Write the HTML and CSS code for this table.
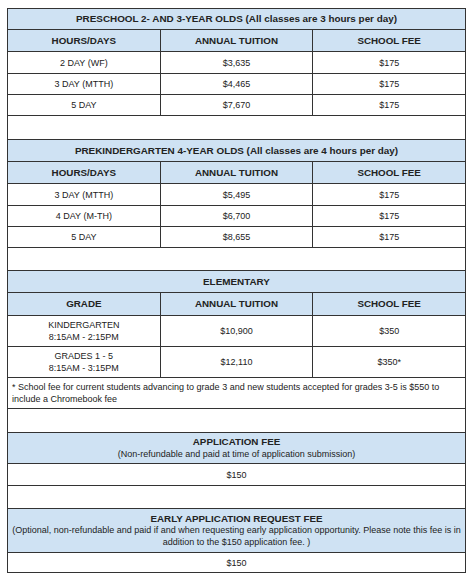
FILE: index.html
```html
<!DOCTYPE html>
<html>
<head>
<meta charset="utf-8">
<link rel="stylesheet" href="styles.css">
</head>
<body>
<table class="fees">
  <colgroup><col class="c"><col class="c"><col class="c"></colgroup>
  <tbody>
    <tr class="h21"><td colspan="3" class="title">PRESCHOOL 2- AND 3-YEAR OLDS (All classes are 3 hours per day)</td></tr>
    <tr class="h22"><td class="head">HOURS/DAYS</td><td class="head">ANNUAL TUITION</td><td class="head">SCHOOL FEE</td></tr>
    <tr class="h22"><td>2 DAY (WF)</td><td>$3,635</td><td>$175</td></tr>
    <tr class="h21"><td>3 DAY (MTTH)</td><td>$4,465</td><td>$175</td></tr>
    <tr class="h21"><td>5 DAY</td><td>$7,670</td><td>$175</td></tr>
    <tr class="h24"><td colspan="3"></td></tr>

    <tr class="h22"><td colspan="3" class="title">PREKINDERGARTEN 4-YEAR OLDS (All classes are 4 hours per day)</td></tr>
    <tr class="h22"><td class="head">HOURS/DAYS</td><td class="head">ANNUAL TUITION</td><td class="head">SCHOOL FEE</td></tr>
    <tr class="h22"><td>3 DAY (MTTH)</td><td>$5,495</td><td>$175</td></tr>
    <tr class="h21"><td>4 DAY (M-TH)</td><td>$6,700</td><td>$175</td></tr>
    <tr class="h21"><td>5 DAY</td><td>$8,655</td><td>$175</td></tr>
    <tr class="h23"><td colspan="3"></td></tr>

    <tr class="h22"><td colspan="3" class="title">ELEMENTARY</td></tr>
    <tr class="h23"><td class="head">GRADE</td><td class="head">ANNUAL TUITION</td><td class="head">SCHOOL FEE</td></tr>
    <tr class="h31"><td>KINDERGARTEN<br>8:15AM - 2:15PM</td><td>$10,900</td><td>$350</td></tr>
    <tr class="h31"><td>GRADES 1 - 5<br>8:15AM - 3:15PM</td><td>$12,110</td><td>$350*</td></tr>
    <tr class="h31"><td colspan="3" class="note">* School fee for current students advancing to grade 3 and new students accepted for grades 3-5 is $550 to include a Chromebook fee</td></tr>
    <tr class="h24"><td colspan="3"></td></tr>

    <tr class="h31"><td colspan="3" class="title sub"><span class="strong">APPLICATION FEE</span><br>(Non-refundable and paid at time of application submission)</td></tr>
    <tr class="h22"><td colspan="3">$150</td></tr>
    <tr class="h23"><td colspan="3"></td></tr>

    <tr class="h44"><td colspan="3" class="title sub"><span class="strong">EARLY APPLICATION REQUEST FEE</span><br>(Optional, non-refundable and paid if and when requesting early application opportunity. Please note this fee is in addition to the $150 application fee. )</td></tr>
    <tr class="h20"><td colspan="3">$150</td></tr>
  </tbody>
</table>
</body>
</html>
```

FILE: styles.css
```css
html, body {
  margin: 0;
  background: #ffffff;
}
body {
  padding: 8px 0 0 7px;
  font-family: "Liberation Sans", Arial, sans-serif;
  color: #222222;
}
.fees {
  width: 459px;
  border-collapse: collapse;
  table-layout: fixed;
  font-size: 9px;
  line-height: 12px;
}
.fees td {
  border: 1px solid #333333;
  text-align: center;
  vertical-align: middle;
  padding: 0 4px;
}
.fees .title {
  background: #cfe2f3;
  font-weight: bold;
  font-size: 9.9px;
}
.fees .title.sub {
  font-weight: normal;
  font-size: 9px;
  line-height: 11.5px;
}
.fees .title.sub .strong {
  font-weight: 700;
  font-size: 9.8px;
}
.fees .head {
  background: #cfe2f3;
  font-weight: bold;
  font-size: 9.8px;
}
.fees .note {
  text-align: left;
  padding: 0 4px;
}
.h20 { height: 20px; }
.h21 { height: 21px; }
.h22 { height: 22px; }
.h23 { height: 23px; }
.h24 { height: 24px; }
.h31 { height: 31px; }
.h44 { height: 44px; }
```
